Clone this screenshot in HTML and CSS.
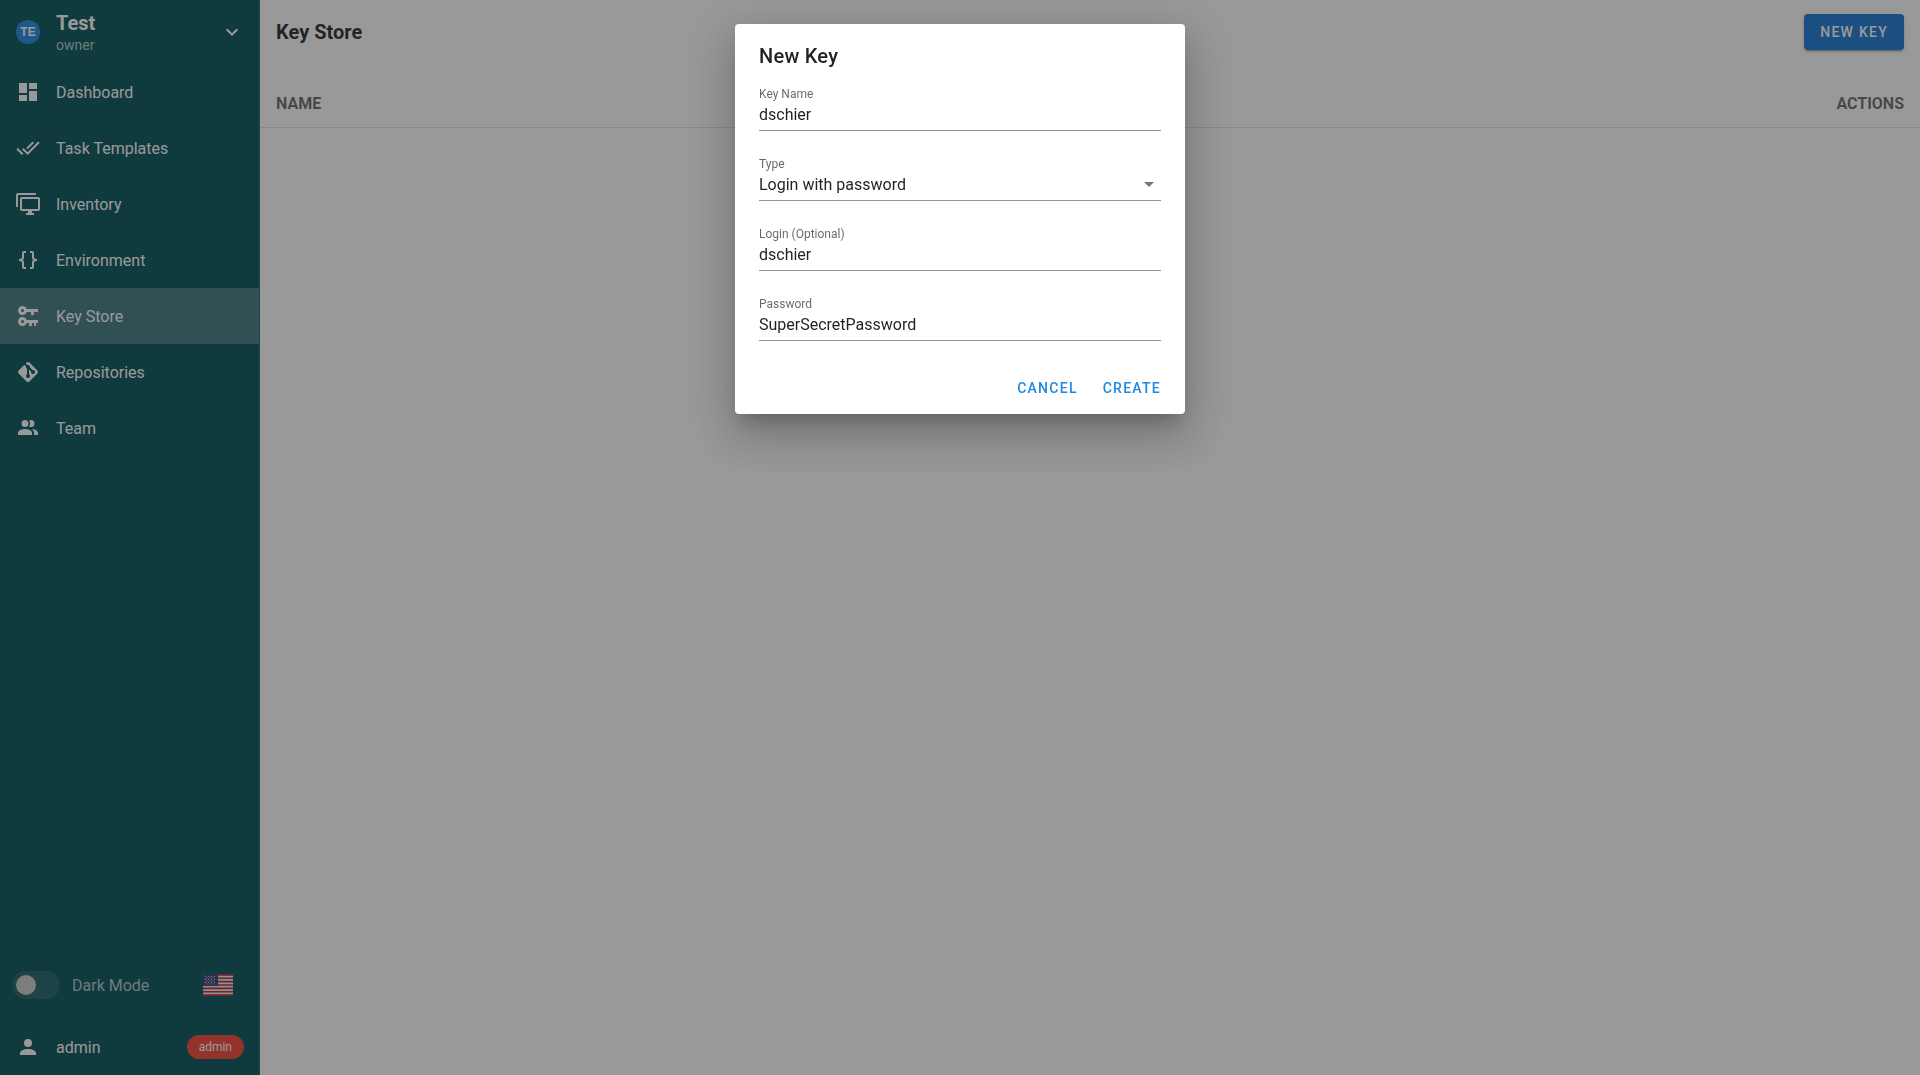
FILE: index.html
```
<!DOCTYPE html>
<html lang="en">
<head>
  <meta charset="UTF-8">
  <meta name="viewport" content="width=device-width, initial-scale=1.0">
  <title>Key Store - Test</title>
  <link rel="stylesheet" href="styles.css">
</head>
<body>
  <div class="app">
    <aside class="sidebar">
      <button class="project" type="button">
        <span class="avatar">TE</span>
        <span class="project-text">
          <span class="project-name">Test</span>
          <span class="project-role">owner</span>
        </span>
        <svg class="icon" viewBox="0 0 24 24"><path d="M7.41,8.58L12,13.17L16.59,8.58L18,10L12,16L6,10L7.41,8.58Z"/></svg>
      </button>

      <nav class="nav">
        <a class="nav-item" href="#dashboard">
          <svg class="icon" viewBox="0 0 24 24"><path d="M13,3V9H21V3M13,21H21V11H13M3,21H11V15H3M3,13H11V3H3V13Z"/></svg>
          Dashboard
        </a>
        <a class="nav-item" href="#templates">
          <svg class="icon" viewBox="0 0 24 24"><path d="M0.41,13.41L6,19L7.41,17.58L1.83,12M22.24,5.58L11.66,16.17L7.5,12L6.07,13.41L11.66,19L23.66,7M18,7L16.59,5.58L10.24,11.93L11.66,13.34L18,7Z"/></svg>
          Task Templates
        </a>
        <a class="nav-item" href="#inventory">
          <svg class="icon" viewBox="0 0 24 24"><path d="M22,17V7H6V17H22M22,5A2,2 0 0,1 24,7V17C24,18.11 23.1,19 22,19H16V21H18V23H10V21H12V19H6C4.89,19 4,18.11 4,17V7A2,2 0 0,1 6,5H22M2,3V15H0V3A2,2 0 0,1 2,1H20V3H2Z"/></svg>
          Inventory
        </a>
        <a class="nav-item" href="#environment">
          <svg class="icon" viewBox="0 0 24 24"><path d="M8,3A2,2 0 0,0 6,5V9A2,2 0 0,1 4,11H3V13H4A2,2 0 0,1 6,15V19A2,2 0 0,0 8,21H10V19H8V14A2,2 0 0,0 6,12A2,2 0 0,0 8,10V5H10V3M16,3A2,2 0 0,1 18,5V9A2,2 0 0,0 20,11H21V13H20A2,2 0 0,0 18,15V19A2,2 0 0,1 16,21H14V19H16V14A2,2 0 0,1 18,12A2,2 0 0,1 16,10V5H14V3H16Z"/></svg>
          Environment
        </a>
        <a class="nav-item active" href="#keys">
          <svg class="icon" viewBox="0 0 24 24"><path fill-rule="evenodd" d="M6.5,2C8.46,2 10.13,3.25 10.74,5H22V8H18V11H15V8H10.74C10.13,9.75 8.46,11 6.5,11A4.5,4.5 0 0,1 6.5,2M6.5,5A1.5,1.5 0 0,0 6.5,8A1.5,1.5 0 0,0 6.5,5M6.5,13C8.46,13 10.13,14.25 10.74,16H22V19H20V22H18V19H16V22H13V19H10.74C10.13,20.75 8.46,22 6.5,22A4.5,4.5 0 0,1 6.5,13M6.5,16A1.5,1.5 0 0,0 6.5,19A1.5,1.5 0 0,0 6.5,16Z"/></svg>
          Key Store
        </a>
        <a class="nav-item" href="#repositories">
          <svg class="icon" viewBox="0 0 24 24"><path d="M2.6,10.59L8.38,4.8L10.07,6.5C9.83,7.35 10.22,8.28 11,8.73V14.27C10.4,14.61 10,15.26 10,16A2,2 0 0,0 12,18A2,2 0 0,0 14,16C14,15.26 13.6,14.61 13,14.27V9.41L15.07,11.5C15,11.65 15,11.82 15,12A2,2 0 0,0 17,14A2,2 0 0,0 19,12A2,2 0 0,0 17,10C16.82,10 16.65,10 16.5,10.07L13.93,7.5C14.19,6.57 13.71,5.55 12.78,5.16C12.35,5 11.9,4.96 11.5,5.07L9.8,3.38L10.59,2.6C11.37,1.81 12.63,1.81 13.41,2.6L21.4,10.59C22.19,11.37 22.19,12.63 21.4,13.41L13.41,21.4C12.63,22.19 11.37,22.19 10.59,21.4L2.6,13.41C1.81,12.63 1.81,11.37 2.6,10.59Z"/></svg>
          Repositories
        </a>
        <a class="nav-item" href="#team">
          <svg class="icon" viewBox="0 0 24 24"><path fill-rule="evenodd" d="M16,17V19H2V17S2,13 9,13S16,17 16,17M12.5,7.5A3.5,3.5 0 1,0 9,11A3.5,3.5 0 0,0 12.5,7.5M15.94,13A5.32,5.32 0 0,1 18,17V19H22V17S22,13.37 15.94,13M15,4A3.39,3.39 0 0,0 13.07,4.59A5,5 0 0,1 13.07,10.41A3.39,3.39 0 0,0 15,11A3.5,3.5 0 0,0 15,4Z"/></svg>
          Team
        </a>
      </nav>

      <div class="settings">
        <input class="switch" type="checkbox" id="dark-mode">
        <label class="switch-label" for="dark-mode">Dark Mode</label>
        <button class="language" type="button" aria-label="Language">
          <svg class="flag" viewBox="0 0 30 22">
            <rect width="30" height="22" fill="#eee"/>
            <path stroke="#b22334" stroke-width="1.7" d="M0,.85H30M0,4.23H30M0,7.61H30M0,11H30M0,14.39H30M0,17.77H30M0,21.15H30"/>
            <rect width="15" height="12" fill="#3c3b6e"/>
            <path stroke="#c9c9dc" stroke-width="1" stroke-dasharray="1 2" d="M2,2.5H14M2,5.5H14M2,8.5H14M3.5,4H12M3.5,7H12M3.5,10H12"/>
          </svg>
        </button>
      </div>

      <a class="nav-item" href="#user">
        <svg class="icon" viewBox="0 0 24 24"><path d="M12,4A4,4 0 0,1 16,8A4,4 0 0,1 12,12A4,4 0 0,1 8,8A4,4 0 0,1 12,4M12,14C16.42,14 20,15.79 20,18V20H4V18C4,15.79 7.58,14 12,14Z"/></svg>
        admin
        <span class="chip">admin</span>
      </a>
    </aside>

    <main class="main">
      <header class="toolbar">
        <h1 class="toolbar-title">Key Store</h1>
        <button class="btn btn-primary" type="button">New Key</button>
      </header>
      <table class="keys">
        <thead>
          <tr>
            <th>NAME</th>
            <th class="actions">ACTIONS</th>
          </tr>
        </thead>
      </table>
    </main>
  </div>

  <div class="overlay">
    <form class="dialog" role="dialog" aria-labelledby="dialog-title">
      <h2 class="dialog-title" id="dialog-title">New Key</h2>
      <div class="fields">
        <div class="field">
          <label for="key-name">Key Name</label>
          <input type="text" id="key-name" value="dschier">
        </div>
        <div class="field">
          <label for="key-type">Type</label>
          <div class="select-wrap">
            <select id="key-type">
              <option>None</option>
              <option>SSH Key</option>
              <option selected>Login with password</option>
            </select>
            <svg class="select-arrow" viewBox="0 2 24 20"><path d="M7,10L12,15L17,10H7Z"/></svg>
          </div>
        </div>
        <div class="field">
          <label for="key-login">Login (Optional)</label>
          <input type="text" id="key-login" value="dschier">
        </div>
        <div class="field">
          <label for="key-password">Password</label>
          <input type="text" id="key-password" value="SuperSecretPassword">
        </div>
      </div>
      <div class="dialog-actions">
        <button class="btn btn-text" type="button">Cancel</button>
        <button class="btn btn-text" type="button">Create</button>
      </div>
    </form>
  </div>
</body>
</html>
```
FILE: styles.css
```
* {
  box-sizing: border-box;
}
body {
  margin: 0;
  font-family: Roboto, sans-serif;
  font-size: 16px;
  line-height: 24px;
  color: rgba(0, 0, 0, 0.87);
}
button, input, select {
  font-family: inherit;
  color: inherit;
}
.app {
  display: flex;
  min-height: 100vh;
}
.icon {
  width: 24px;
  height: 24px;
  flex: none;
  fill: currentColor;
}

/* Sidebar */
.sidebar {
  display: flex;
  flex-direction: column;
  flex: 0 0 260px;
  background: #005057;
  border-right: 1px solid rgba(255, 255, 255, 0.12);
  color: #fff;
  line-height: 25px;
}
.project {
  display: flex;
  align-items: center;
  gap: 16px;
  height: 64px;
  padding: 0 15px 0 16px;
  border: 0;
  background: none;
  text-align: left;
  cursor: pointer;
}
.avatar {
  width: 24px;
  height: 24px;
  border-radius: 50%;
  background: #1e88e5;
  font-family: "Liberation Sans", sans-serif;
  font-size: 12px;
  font-weight: bold;
  line-height: 25px;
  text-align: center;
}
.project-text {
  display: flex;
  flex-direction: column;
  flex: 1;
  padding-top: 2px;
}
.project-name {
  font-size: 20px;
  font-weight: 700;
  line-height: 24px;
}
.project-role {
  font-size: 14px;
  line-height: 20px;
  color: rgba(255, 255, 255, 0.7);
}
.nav {
  flex: 1;
}
.nav-item {
  display: flex;
  align-items: center;
  gap: 16px;
  height: 56px;
  padding: 0 15px 0 16px;
  color: #fff;
  text-decoration: none;
}
.nav-item.active {
  background: rgba(255, 255, 255, 0.24);
}
.settings {
  display: flex;
  align-items: center;
  height: 68px;
  padding: 0 26px 0 12px;
}
.switch {
  appearance: none;
  display: flex;
  align-items: center;
  width: 48px;
  height: 28px;
  margin: 0 12px 0 0;
  padding: 0 4px;
  border-radius: 14px;
  background: rgba(255, 255, 255, 0.1);
  cursor: pointer;
}
.switch::before {
  content: "";
  width: 20px;
  height: 20px;
  border-radius: 50%;
  background: #ccc;
}
.switch:checked {
  justify-content: flex-end;
}
.switch-label {
  flex: 1;
  color: rgba(255, 255, 255, 0.7);
}
.language {
  display: flex;
  padding: 0;
  border: 0;
  background: none;
  cursor: pointer;
}
.flag {
  width: 30px;
  height: 22px;
  border-radius: 3px;
}
.chip {
  height: 24px;
  margin-left: auto;
  padding: 0 12px;
  border-radius: 12px;
  background: #f44336;
  font-size: 12px;
}

/* Page */
.main {
  flex: 1;
  background: #fff;
}
.toolbar {
  display: flex;
  align-items: center;
  justify-content: space-between;
  height: 64px;
  padding: 0 16px;
}
.toolbar-title {
  margin: 0;
  font-size: 20px;
  font-weight: 700;
}
.btn {
  height: 36px;
  border: 0;
  border-radius: 4px;
  font-size: 14px;
  font-weight: 500;
  letter-spacing: 0.09em;
  text-transform: uppercase;
  cursor: pointer;
}
.btn-primary {
  padding: 0 16px;
  background: #1976d2;
  color: #fff;
  box-shadow: 0 3px 1px -2px rgba(0, 0, 0, 0.2), 0 2px 2px 0 rgba(0, 0, 0, 0.14), 0 1px 5px 0 rgba(0, 0, 0, 0.12);
}
.btn-text {
  padding: 0 8px;
  background: none;
  color: #1e88e5;
}
.keys {
  width: 100%;
  margin-top: 16px;
  border-collapse: separate;
  border-spacing: 0;
}
.keys th {
  height: 48px;
  padding: 0 16px;
  border-bottom: 1px solid rgba(0, 0, 0, 0.12);
  color: rgba(0, 0, 0, 0.6);
  text-align: left;
}
.keys .actions {
  text-align: right;
}

/* Dialog */
.overlay {
  position: fixed;
  inset: 0;
  display: flex;
  align-items: flex-start;
  justify-content: center;
  padding: 24px;
  background: rgba(33, 33, 33, 0.46);
}
.dialog {
  width: 100%;
  max-width: 450px;
  border-radius: 4px;
  background: #fff;
  box-shadow: 0 11px 15px -7px rgba(0, 0, 0, 0.2), 0 24px 38px 3px rgba(0, 0, 0, 0.14), 0 9px 46px 8px rgba(0, 0, 0, 0.12);
}
.dialog-title {
  margin: 0;
  padding: 16px 24px 4px;
  font-size: 20px;
  font-weight: 500;
  line-height: 32px;
  letter-spacing: 0.0125em;
}
.fields {
  display: flex;
  flex-direction: column;
  gap: 15px;
  padding: 0 24px 21px;
}
.field {
  display: flex;
  flex-direction: column;
  padding-top: 8px;
}
.field label {
  font-size: 12px;
  line-height: 20px;
  color: rgba(0, 0, 0, 0.6);
}
.field input,
.field select {
  width: 100%;
  height: 27px;
  padding: 0 0 6px;
  border: 0;
  border-bottom: 1px solid rgba(0, 0, 0, 0.42);
  border-radius: 0;
  outline: 0;
  background: none;
  font-size: 16px;
}
.field select {
  appearance: none;
}
.select-wrap {
  display: grid;
}
.select-wrap > * {
  grid-area: 1 / 1;
}
.select-arrow {
  justify-self: end;
  width: 24px;
  height: 20px;
  fill: rgba(0, 0, 0, 0.54);
  pointer-events: none;
}
.dialog-actions {
  display: flex;
  justify-content: flex-end;
  gap: 9px;
  padding: 8px 16px;
}
```
